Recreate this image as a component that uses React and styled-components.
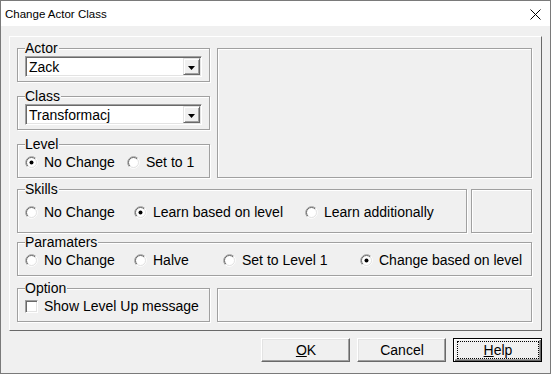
import React from 'react';
import styled, { createGlobalStyle, css } from 'styled-components';

const GlobalStyle = createGlobalStyle`
  html, body { margin: 0; padding: 0; background: #f0f0f0; }
  body { font-family: "Liberation Sans", Arial, sans-serif; }
`;

const Window = styled.div`
  width: 551px;
  height: 374px;
  box-sizing: border-box;
  border: 1px solid #7a7a7a;
  background: #f0f0f0;
  display: flex;
  flex-direction: column;
  font-family: "Liberation Sans", Arial, sans-serif;
  font-size: 14px;
  line-height: 16px;
  color: #000;
`;

const TitleBar = styled.div`
  height: 25px;
  flex: none;
  background: #fff;
  display: flex;
  align-items: center;
  justify-content: space-between;
  padding: 0 9px 0 4px;
  font-size: 11.5px;
  color: #000;
`;

const CloseIcon = styled.svg`
  display: block;
  margin-top: 1px;
`;

const Body = styled.div`
  flex: 1;
  display: flex;
  flex-direction: column;
  padding: 10px 8px 0;
`;

const Frame = styled.div`
  height: 295px;
  box-sizing: border-box;
  border: 1px solid;
  border-color: #fff #696969 #696969 #fff;
  padding: 11px 9px 0 7px;
  display: flex;
  flex-direction: column;
`;

const Row = styled.div`
  display: flex;
  gap: ${p => p.$gap}px;
  margin-top: ${p => p.$mt || 0}px;
  height: ${p => p.$h}px;
`;

const Column = styled.div`
  width: ${p => p.$w}px;
  display: flex;
  flex-direction: column;
  gap: ${p => p.$gap}px;
`;

const Etched = styled.div`
  box-sizing: border-box;
  border: 1px solid #a0a0a0;
  box-shadow: 1px 1px 0 #fff, inset 1px 1px 0 #fff;
  height: ${p => p.$h || 34}px;
  ${p => (p.$w ? css`width: ${p.$w}px; flex: none;` : css`flex: 1;`)}
`;

const GroupBox = styled(Etched)`
  display: flex;
  flex-direction: column;
  padding: 0 8px 0 7px;
`;

const Caption = styled.div`
  align-self: flex-start;
  margin-top: -9px;
  padding-right: 1px;
  background: #f0f0f0;
  white-space: nowrap;
`;

const Combo = styled.div`
  box-sizing: border-box;
  width: 177px;
  height: 21px;
  border: 1px solid;
  border-color: #a0a0a0 #fff #fff #a0a0a0;
  box-shadow: inset 1px 1px 0 #696969, inset -1px -1px 0 #e3e3e3;
  background: #fff;
  display: flex;
  align-items: center;
  padding: 1px 1px 1px 3px;
`;

const ComboText = styled.span`
  flex: 1;
  white-space: nowrap;
`;

const DropButton = styled.div`
  box-sizing: border-box;
  width: 17px;
  height: 17px;
  border: 1px solid;
  border-color: #e3e3e3 #696969 #696969 #e3e3e3;
  box-shadow: inset 1px 1px 0 #fff, inset -1px -1px 0 #a0a0a0;
  background: #f0f0f0;
  display: flex;
  align-items: center;
  justify-content: center;
`;

const OptionRow = styled.div`
  display: flex;
  align-items: center;
  height: 16px;
  margin-top: ${p => p.$mt}px;
`;

const RadioOption = styled.label`
  display: flex;
  align-items: center;
  gap: 6px;
  flex: none;
  width: ${p => (p.$w ? `${p.$w}px` : 'auto')};
  white-space: nowrap;
`;

const CheckBox = styled.span`
  box-sizing: border-box;
  width: 13px;
  height: 13px;
  flex: none;
  border: 1px solid;
  border-color: #a0a0a0 #fff #fff #a0a0a0;
  box-shadow: inset 1px 1px 0 #696969, inset -1px -1px 0 #e3e3e3;
  background: #fff;
`;

const ButtonBar = styled.div`
  display: flex;
  justify-content: flex-end;
  gap: 7px;
  margin-top: 7px;
`;

const Button = styled.button`
  width: 89px;
  height: 24px;
  box-sizing: border-box;
  font: inherit;
  color: #000;
  background: #f0f0f0;
  border: 1px solid;
  border-color: #fff #696969 #696969 #fff;
  box-shadow: inset -1px -1px 0 #a0a0a0, inset 1px 1px 0 #e3e3e3;
  padding: 2px 2px 2px 3px;
  display: flex;
  ${p =>
    p.$default &&
    css`
      border-color: #000;
      box-shadow: inset 1px 1px 0 #fff, inset -1px -1px 0 #696969,
        inset -2px -2px 0 #a0a0a0;
    `}
`;

const FocusRing = styled.span`
  flex: 1;
  display: flex;
  align-items: center;
  justify-content: center;
  border: 1px dotted ${p => (p.$on ? '#000' : 'transparent')};
`;

function Radio({ checked }) {
  return (
    <svg width="13" height="13" viewBox="0 0 13 13" style={{ display: 'block', flex: 'none' }}>
      <circle cx="6.5" cy="6.5" r="5" fill="#fff" />
      <path d="M2.26 10.74 A6 6 0 0 1 10.74 2.26" fill="none" stroke="#a0a0a0" />
      <path d="M10.74 2.26 A6 6 0 0 1 2.26 10.74" fill="none" stroke="#fff" />
      <path d="M2.96 10.04 A5 5 0 0 1 10.04 2.96" fill="none" stroke="#696969" />
      <path d="M10.04 2.96 A5 5 0 0 1 2.96 10.04" fill="none" stroke="#e3e3e3" />
      {checked && <circle cx="6.5" cy="6.5" r="2" fill="#000" />}
    </svg>
  );
}

function ComboBox({ value }) {
  return (
    <Combo>
      <ComboText>{value}</ComboText>
      <DropButton>
        <svg width="7" height="4" viewBox="0 0 7 4" style={{ display: 'block', marginTop: '2px' }}>
          <polygon points="0,0 7,0 3.5,4" fill="#000" />
        </svg>
      </DropButton>
    </Combo>
  );
}

export default function App() {
  return (
    <>
      <GlobalStyle />
      <Window>
        <TitleBar>
          <span>Change Actor Class</span>
          <CloseIcon width="11" height="11" viewBox="0 0 11 11">
            <path d="M0.5 0.5 L10.5 10.5 M10.5 0.5 L0.5 10.5" stroke="#000" strokeWidth="1" />
          </CloseIcon>
        </TitleBar>
        <Body>
          <Frame>
            <Row $gap={7} $h={130}>
              <Column $w={193} $gap={14}>
                <GroupBox>
                  <Caption>Actor</Caption>
                  <ComboBox value="Zack" />
                </GroupBox>
                <GroupBox>
                  <Caption>Class</Caption>
                  <ComboBox value="Transformacj" />
                </GroupBox>
                <GroupBox>
                  <Caption>Level</Caption>
                  <OptionRow $mt={2}>
                    <RadioOption $w={102}>
                      <Radio checked />
                      No Change
                    </RadioOption>
                    <RadioOption>
                      <Radio />
                      Set to 1
                    </RadioOption>
                  </OptionRow>
                </GroupBox>
              </Column>
              <Etched $h={130} />
            </Row>

            <Row $gap={4} $h={44} $mt={11}>
              <GroupBox $h={44}>
                <Caption>Skills</Caption>
                <OptionRow $mt={7}>
                  <RadioOption $w={109}>
                    <Radio />
                    No Change
                  </RadioOption>
                  <RadioOption $w={171}>
                    <Radio checked />
                    Learn based on level
                  </RadioOption>
                  <RadioOption>
                    <Radio />
                    Learn additionally
                  </RadioOption>
                </OptionRow>
              </GroupBox>
              <Etched $w={61} $h={44} />
            </Row>

            <Row $gap={0} $h={34} $mt={9}>
              <GroupBox>
                <Caption>Paramaters</Caption>
                <OptionRow $mt={2}>
                  <RadioOption $w={109}>
                    <Radio />
                    No Change
                  </RadioOption>
                  <RadioOption $w={89}>
                    <Radio />
                    Halve
                  </RadioOption>
                  <RadioOption $w={137}>
                    <Radio />
                    Set to Level 1
                  </RadioOption>
                  <RadioOption>
                    <Radio checked />
                    Change based on level
                  </RadioOption>
                </OptionRow>
              </GroupBox>
            </Row>

            <Row $gap={7} $h={34} $mt={12}>
              <GroupBox $w={193}>
                <Caption>Option</Caption>
                <OptionRow $mt={2}>
                  <RadioOption>
                    <CheckBox />
                    Show Level Up message
                  </RadioOption>
                </OptionRow>
              </GroupBox>
              <Etched />
            </Row>
          </Frame>
          <ButtonBar>
            <Button>
              <FocusRing>
                <u>O</u>K
              </FocusRing>
            </Button>
            <Button>
              <FocusRing>Cancel</FocusRing>
            </Button>
            <Button $default>
              <FocusRing $on>
                <u>H</u>elp
              </FocusRing>
            </Button>
          </ButtonBar>
        </Body>
      </Window>
    </>
  );
}
